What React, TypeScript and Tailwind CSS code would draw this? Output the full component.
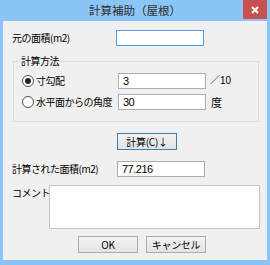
import React from "react";

const jp = { fontFamily: '"Noto Sans CJK JP", "Noto Sans", sans-serif' };
const latin = { fontFamily: '"Liberation Sans", "Noto Sans CJK JP", sans-serif' };

function Radio({ checked }: { checked?: boolean }) {
  return (
    <span className="flex h-[12px] w-[12px] shrink-0 items-center justify-center rounded-full border border-[#4d4d4d] bg-white">
      {checked && <span className="h-[6px] w-[6px] rounded-full bg-[#222]" />}
    </span>
  );
}

function Field({ value, focused, className = "" }: { value?: string; focused?: boolean; className?: string }) {
  return (
    <div
      className={`flex h-[16px] w-[88px] shrink-0 items-center border bg-white pl-[4px] text-[11px] text-black ${
        focused ? "border-[#569de5]" : "border-[#abadb3]"
      } ${className}`}
      style={latin}
    >
      {value}
    </div>
  );
}

function Btn({ children, focused, className = "" }: { children: React.ReactNode; focused?: boolean; className?: string }) {
  return (
    <div
      className={`flex h-[17px] w-[60px] items-center justify-center border bg-gradient-to-b from-[#f2f2f2] to-[#e3e3e3] text-[10px] tracking-[-0.3px] text-black ${
        focused ? "border-[#3c7fb1]" : "border-[#acacac]"
      } ${className}`}
      style={jp}
    >
      {children}
    </div>
  );
}

export default function App() {
  return (
    <div className="flex h-[265px] w-[270px] flex-col bg-[#8bc4f6]" style={jp}>
      {/* title bar */}
      <div className="relative flex h-[21px] shrink-0 items-center justify-center">
        <span className="text-[11.5px] leading-none text-[#2e2e2e]">計算補助（屋根）</span>
        <div className="absolute right-[3px] top-0 flex h-[19px] w-[24px] items-center justify-center bg-[#c75050]">
          <svg width="8" height="8" viewBox="0 0 8 8">
            <path d="M1 1L7 7M7 1L1 7" stroke="#fff" strokeWidth="2" />
          </svg>
        </div>
      </div>

      {/* client */}
      <div className="mb-[5px] ml-[3px] mr-[3px] flex flex-1 flex-col whitespace-nowrap bg-[#f0f0f0] text-[10px] leading-none tracking-[-0.5px] text-black">
        <div className="mt-[9px] flex h-[16px] items-center">
          <span className="ml-[9px] w-[104px]">元の面積(m2)</span>
          <Field focused />
        </div>

        <fieldset className="ml-[10px] mt-[9px] h-[67px] w-[246px] border border-[#dcdcdc] px-[8px]">
          <legend className="ml-[-2px] px-[1px] text-[10px] leading-[12px]">計算方法</legend>
          <div className="mt-[6px] flex h-[16px] items-center">
            <Radio checked />
            <span className="ml-[2px] w-[82px]">寸勾配</span>
            <Field value="3" className="w-[87px]" />
            <span className="ml-[4px] text-[10px] tracking-normal" style={latin}>
              ／10
            </span>
          </div>
          <div className="mt-[5px] flex h-[16px] items-center">
            <Radio />
            <span className="ml-[2px] w-[82px]">水平面からの角度</span>
            <Field value="30" className="w-[87px]" />
            <span className="ml-[5px] text-[11px]">度</span>
          </div>
        </fieldset>

        <div className="mt-[11px] flex">
          <Btn focused className="ml-[114px]">
            計算(C)↓
          </Btn>
        </div>

        <div className="mt-[11px] flex h-[16px] items-center">
          <span className="ml-[9px] w-[105px]">計算された面積(m2)</span>
          <Field value="77.216" className="w-[87px]" />
        </div>

        <div className="mt-[8px] flex">
          <span className="ml-[9px] mt-[3px] w-[37px]">コメント</span>
          <div className="h-[44px] w-[211px] border border-[#c4c4c4] bg-white" />
        </div>

        <div className="mt-[7px] flex gap-[8px] pl-[75px]">
          <Btn>OK</Btn>
          <Btn>キャンセル</Btn>
        </div>
      </div>
    </div>
  );
}
